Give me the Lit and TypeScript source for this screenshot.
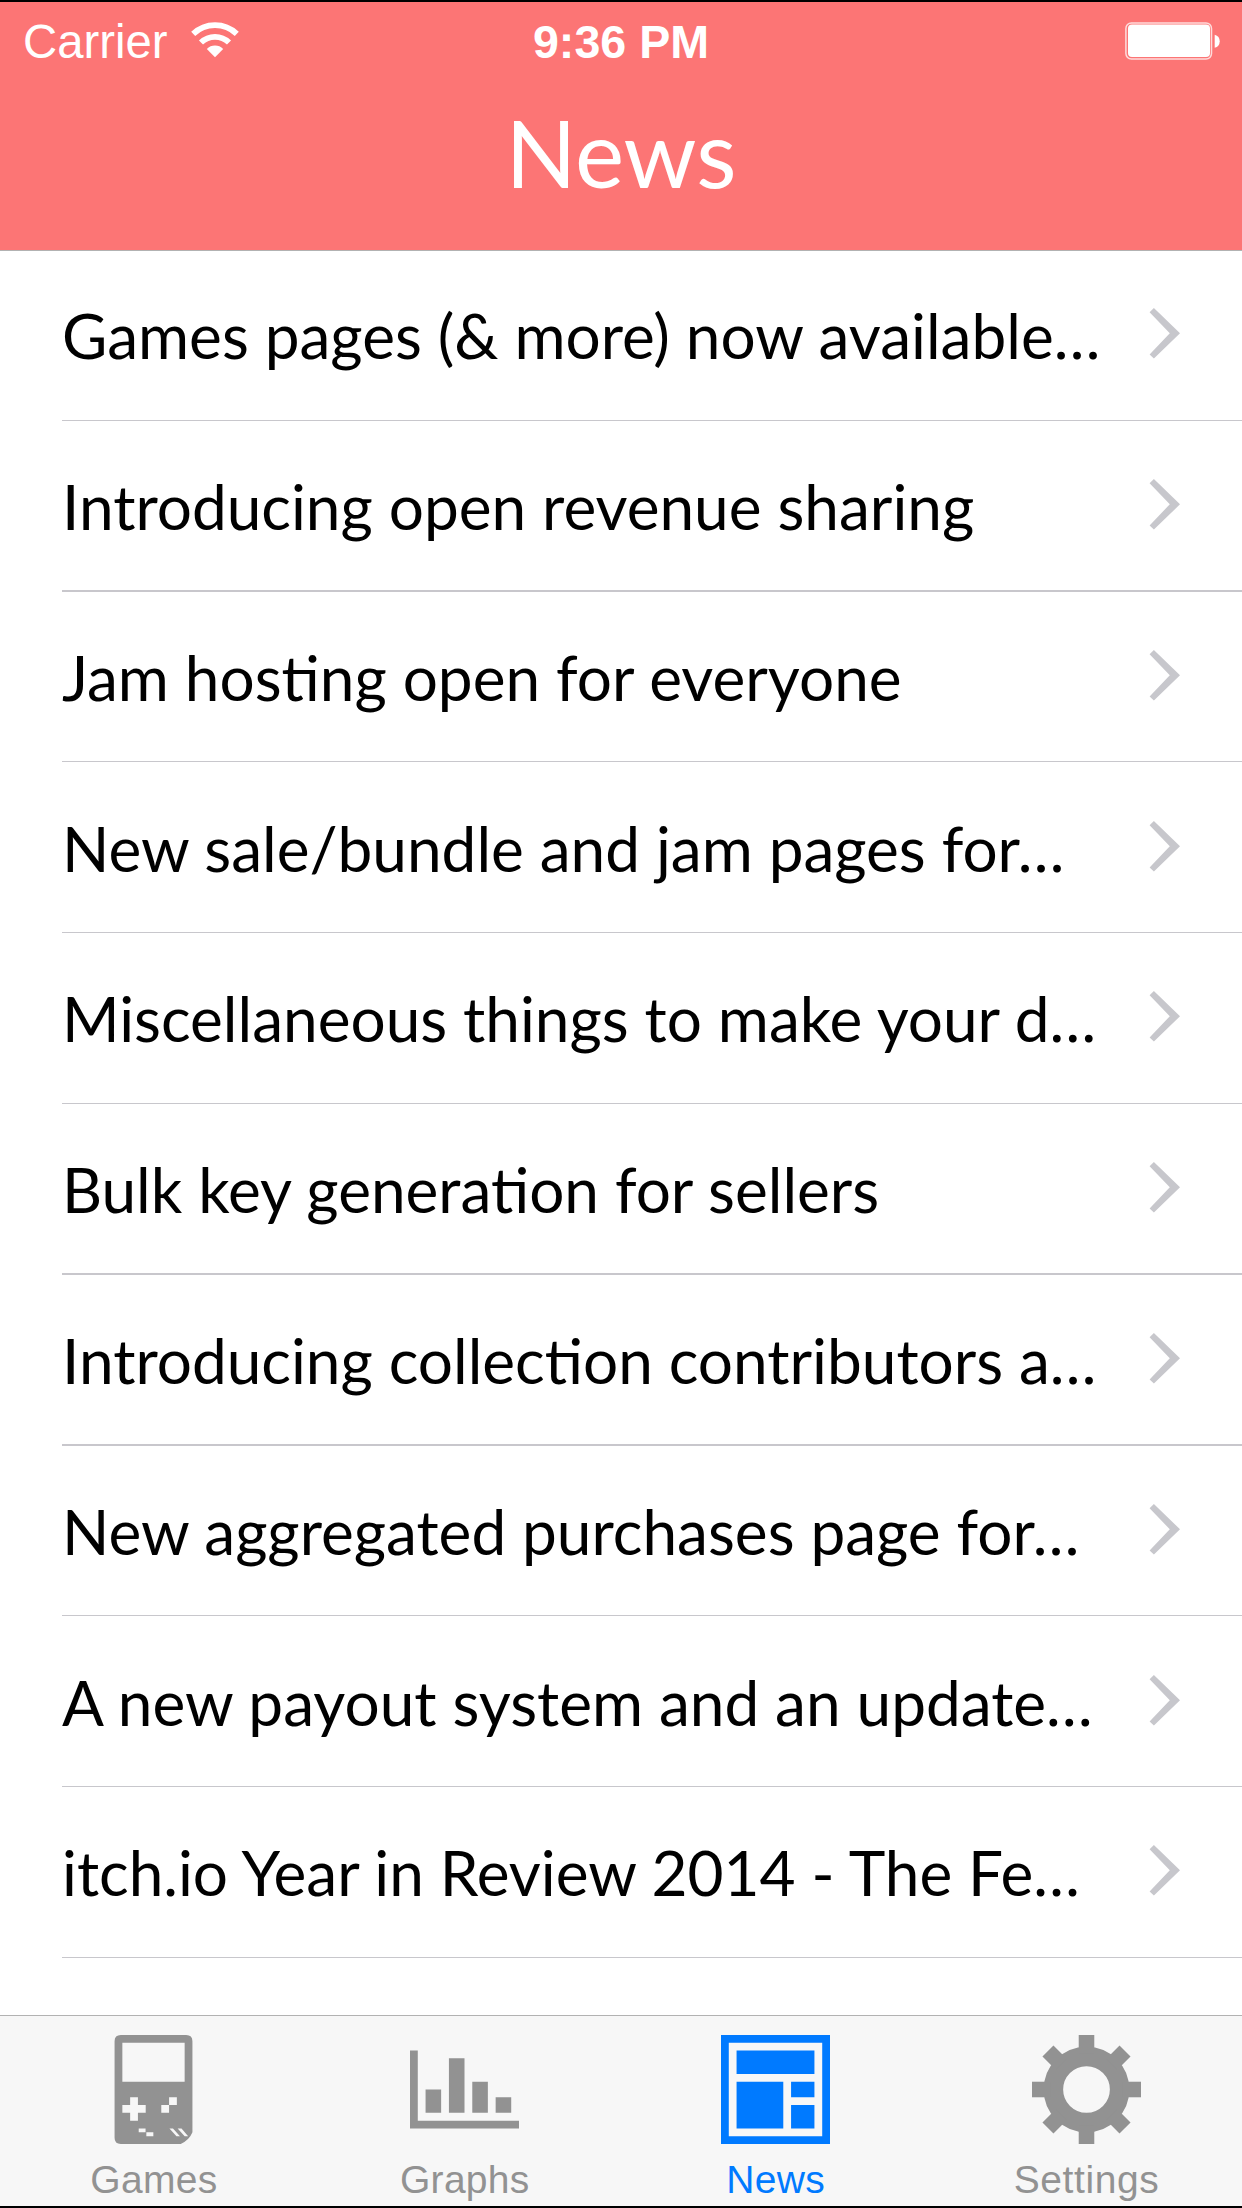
import { LitElement, html, css, svg } from "lit";
import { customElement, property } from "lit/decorators.js";
import { classMap } from "lit/directives/class-map.js";

type Shift = "up" | "down" | "";

interface NewsItem {
  title: string;
  thick?: boolean;
  shift?: Shift;
}

const NEWS: NewsItem[] = [
  { title: "Games pages (& more) now available…", shift: "up" },
  { title: "Introducing open revenue sharing", thick: true },
  { title: "Jam hosting open for everyone" },
  { title: "New sale/bundle and jam pages for…", shift: "down" },
  { title: "Miscellaneous things to make your d…" },
  { title: "Bulk key generation for sellers", thick: true },
  { title: "Introducing collection contributors a…", thick: true },
  { title: "New aggregated purchases page for…" },
  { title: "A new payout system and an update…", shift: "down" },
  { title: "itch.io Year in Review 2014 - The Fe…" },
];

// Tab icons share a 14-unit grid.
const ICONS: Record<string, unknown> = {
  games: svg`<path fill-rule="evenodd" d="M2.8 0H11.2Q12 0 12 .8V12.5Q11.6 13.5 10.5 14H2.8Q2 14 2 13.2V.8Q2 0 2.8 0Z
    M3 1V6H11V1Z M4 8H5V9H6V10H5V11H4V10H3V9H4Z M9 8H10V9H9Z M8 9H9V10H8Z
    M5.1 12.02H5.98V12.5H5.1Z M6.08 12.5H6.98V13H6.08Z M9.05 12.02H9.5L10.4 13H9.95Z M10.1 12.02H10.6L11.45 13H11Z"/>`,
  graphs: svg`<path d="M0 2H1V11H14V12H0Z M2 7H4V10H2Z M5 3H7V10H5Z M8 6H10V10H8Z M11 8H13V10H11Z"/>`,
  news: svg`<path fill-rule="evenodd" d="M0 0H14V14H0Z M1 1V13H13V1Z M2 2H12V5H2Z M2 6H8V12H2Z M9 6H12V8H9Z M9 9H12V12H9Z"/>`,
  settings: svg`<circle cx="7" cy="7" r="4.25" fill="none" stroke="currentColor" stroke-width="2.5"/>
    ${[0, 45, 90, 135, 180, 225, 270, 315].map(
      (a) => svg`<rect x="6" y="0" width="2" height="2.4" transform="rotate(${a} 7 7)"/>`
    )}`,
};

@customElement("status-bar")
class StatusBar extends LitElement {
  static styles = css`
    :host {
      display: grid;
      grid-template-columns: 1fr auto 1fr;
      align-items: center;
      height: 80px;
      padding: 0 22px;
      color: #fff;
      font: 47.3px/54px "Liberation Sans", sans-serif;
      box-sizing: border-box;
    }
    .left { display: flex; align-items: center; gap: 23px; }
    .wifi { display: block; width: 48px; height: 36px; margin-top: -4px; }
    .carrier { padding-left: 1px; }
    .time { font-weight: 700; font-size: 46.6px; }
    .battery { display: block; width: 95px; height: 38px; justify-self: end; margin-top: -2px; }
  `;
  render() {
    return html`
      <div class="left">
        <span class="carrier">Carrier</span>
        <svg class="wifi" viewBox="0 0 48 36" fill="none" stroke="#fff">
          <path d="M2.2 11.9A31.5 31.5 0 0 1 45.8 11.9" stroke-width="5.8" />
          <path d="M10 20.5A20 20 0 0 1 38 20.5" stroke-width="5.8" />
          <path d="M15.8 27A11.6 11.6 0 0 1 32.2 27L24 35.3Z" fill="#fff" stroke="none" />
        </svg>
      </div>
      <span class="time">9:36 PM</span>
      <svg class="battery" viewBox="0 0 95 38">
        <rect x=".9" y=".9" width="85.6" height="36.2" rx="5.5" fill="none" stroke="#fff" stroke-opacity=".75" stroke-width="1.5" />
        <rect x="3" y="2.6" width="82" height="32.4" rx="4" fill="#fff" />
        <path d="M89.7 12.7Q94.7 14 94.7 19.2T89.7 25.8Z" fill="#fff" />
      </svg>
    `;
  }
}

@customElement("news-row")
class NewsRow extends LitElement {
  @property({ attribute: false }) item!: NewsItem;
  static styles = css`
    :host { display: grid; }
    .row {
      display: flex;
      align-items: flex-start;
      justify-content: space-between;
      box-sizing: border-box;
      padding: 47px 62px 0 0;
      border-bottom: 1px solid #c8c7cc;
    }
    .thick { border-bottom-width: 2px; }
    .up { padding-top: 46px; }
    .down { padding-top: 48px; }
    .title {
      color: #000;
      font: 62.1px/76px Lato, sans-serif;
      white-space: nowrap;
    }
    .chevron { display: block; width: 31px; height: 51px; margin-top: 11px; }
  `;
  render() {
    const { title, thick, shift } = this.item;
    const classes = { row: true, thick: !!thick, up: shift === "up", down: shift === "down" };
    return html`
      <div class=${classMap(classes)}>
        <span class="title">${title}</span>
        <svg class="chevron" viewBox="0 0 31 51">
          <path d="M4.9 0L31 25.3L4.9 50.6L.6 46.4L20.8 25.3L.6 4.2Z" fill="#c7c7cc" />
        </svg>
      </div>
    `;
  }
}

@customElement("tab-item")
class TabItem extends LitElement {
  @property() icon = "";
  @property() label = "";
  @property({ type: Boolean }) active = false;
  static styles = css`
    :host { display: block; }
    .tab {
      display: flex;
      flex-direction: column;
      align-items: center;
      padding-top: 19px;
      color: #929292;
    }
    .active { color: #007aff; }
    .icon { display: block; width: 109px; height: 109px; }
    .label {
      margin-top: 13px;
      font: 39px/46px "Liberation Sans", sans-serif;
      letter-spacing: 0.3px;
      white-space: nowrap;
    }
    .wide { letter-spacing: 0.6px; }
  `;
  render() {
    return html`
      <div class=${classMap({ tab: true, active: this.active })}>
        <svg class="icon" viewBox="0 0 14 14" fill="currentColor">${ICONS[this.icon]}</svg>
        <span class=${classMap({ label: true, wide: this.label.length > 6 })}>${this.label}</span>
      </div>
    `;
  }
}

@customElement("app-root")
class AppRoot extends LitElement {
  static styles = css`
    :host {
      display: flex;
      flex-direction: column;
      width: 1242px;
      height: 2208px;
      box-sizing: border-box;
      overflow: hidden;
      border-top: 2px solid #000;
      border-bottom: 2px solid #000;
      background: #fff;
    }
    .header {
      height: 249px;
      box-sizing: border-box;
      border-bottom: 1px solid #b2b2b2;
      background: #fc7575;
    }
    .heading {
      margin: 14px 0 0;
      color: #fff;
      text-align: center;
      font: 93px/112px Lato, sans-serif;
    }
    .list {
      display: grid;
      grid-template-rows: 170px 171px 170px 171px 171px 171px 171px 170px 171px 171px;
      padding-left: 62px;
    }
    .tabs {
      display: grid;
      grid-template-columns: repeat(4, 1fr);
      gap: 14px;
      margin-top: auto;
      height: 191px;
      padding: 0 7px 0 5.5px;
      box-sizing: border-box;
      border-top: 1px solid #b2b2b2;
      background: #f7f7f7;
    }
  `;
  render() {
    return html`
      <header class="header">
        <status-bar></status-bar>
        <h1 class="heading">News</h1>
      </header>
      <main class="list">
        ${NEWS.map((item) => html`<news-row .item=${item}></news-row>`)}
      </main>
      <nav class="tabs">
        <tab-item icon="games" label="Games"></tab-item>
        <tab-item icon="graphs" label="Graphs"></tab-item>
        <tab-item icon="news" label="News" active></tab-item>
        <tab-item icon="settings" label="Settings"></tab-item>
      </nav>
    `;
  }
}
